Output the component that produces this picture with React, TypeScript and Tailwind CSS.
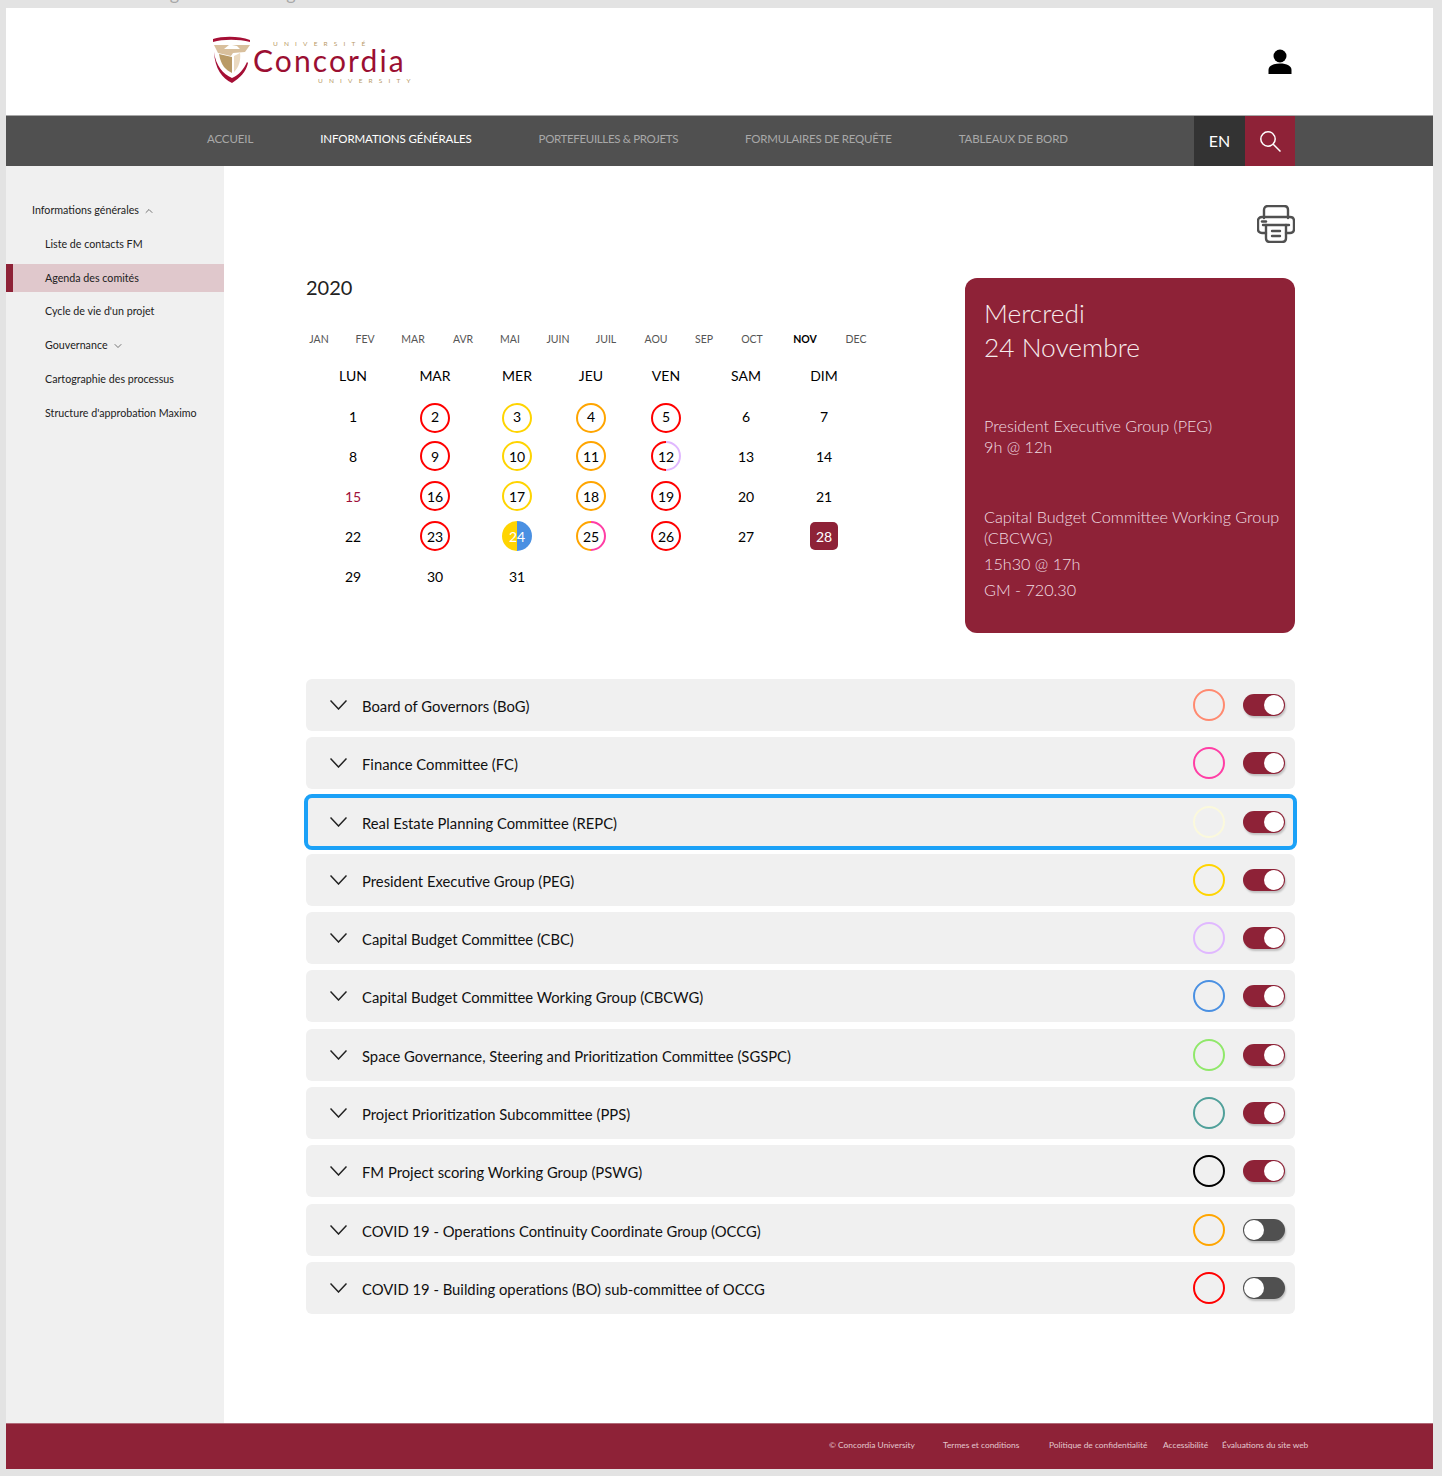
import { ChevronDown, ChevronUp } from "lucide-react";

const months = ["JAN", "FEV", "MAR", "AVR", "MAI", "JUIN", "JUIL", "AOU", "SEP", "OCT", "NOV", "DEC"];
const weekDays = ["LUN", "MAR", "MER", "JEU", "VEN", "SAM", "DIM"];

const RED = "#ff0000";
const YELLOW = "#ffd400";
const ORANGE = "#ffa500";
const LILAC = "#e0b8ff";
const PINK = "#ff3ea5";
const BLUE = "#4a90e2";

type Day = {
  n: number;
  ring?: string;
  split?: [string, string];
  filled?: boolean;
  today?: boolean;
  holiday?: boolean;
};

const days: (Day | null)[] = [
  { n: 1 }, { n: 2, ring: RED }, { n: 3, ring: YELLOW }, { n: 4, ring: ORANGE }, { n: 5, ring: RED }, { n: 6 }, { n: 7 },
  { n: 8 }, { n: 9, ring: RED }, { n: 10, ring: YELLOW }, { n: 11, ring: ORANGE }, { n: 12, split: [RED, LILAC] }, { n: 13 }, { n: 14 },
  { n: 15, holiday: true }, { n: 16, ring: RED }, { n: 17, ring: YELLOW }, { n: 18, ring: ORANGE }, { n: 19, ring: RED }, { n: 20 }, { n: 21 },
  { n: 22 }, { n: 23, ring: RED }, { n: 24, split: [YELLOW, BLUE], filled: true }, { n: 25, split: [ORANGE, PINK] }, { n: 26, ring: RED }, { n: 27 }, { n: 28, today: true },
  { n: 29 }, { n: 30 }, { n: 31 }, null, null, null, null,
];

const committees = [
  { name: "Board of Governors (BoG)", color: "#ff8a70", on: true },
  { name: "Finance Committee (FC)", color: "#ff3ea5", on: true },
  { name: "Real Estate Planning Committee (REPC)", color: "#fbf9dc", on: true, focused: true },
  { name: "President Executive Group (PEG)", color: "#ffd400", on: true },
  { name: "Capital Budget Committee (CBC)", color: "#e0b8ff", on: true },
  { name: "Capital Budget Committee Working Group (CBCWG)", color: "#4a90e2", on: true },
  { name: "Space Governance, Steering and Prioritization Committee (SGSPC)", color: "#90e86a", on: true },
  { name: "Project Prioritization Subcommittee (PPS)", color: "#50a09a", on: true },
  { name: "FM Project scoring Working Group (PSWG)", color: "#000000", on: true },
  { name: "COVID 19 - Operations Continuity Coordinate Group (OCCG)", color: "#ffa500", on: false },
  { name: "COVID 19 - Building operations (BO) sub-committee of OCCG", color: "#ff0000", on: false },
];

function Logo() {
  return (
    <div className="flex h-[48px] items-start">
      <svg width="38" height="48" viewBox="0 0 38 48" className="mt-[-1.5px]">
        <path d="M0 3 C10 0 26 0 37 4 L37 6 C26 3 10 3 0 6 Z" fill="#a50f35" />
        <path d="M1 9 L37 9 L32 16 L20 17 L18 20 L5 17 Z" fill="#d8bf9c" />
        <path d="M11 13 L16 9 L17 7 L19 9 L24 10 L27 13 Z" fill="#ffffff" />
        <path d="M6 18 L19 21 L19 37 C13 34 8 30 6 18 Z" fill="#b99a66" />
        <path d="M21 20 L27 17 C28 24 26 31 21 36 Z" fill="#ead9c0" />
        <path d="M1 16 C3 30 10 38 19 42 C26 39 31 33 34 26 L35 27 C33 36 27 42 19 47 C9 42 2 33 1 16 Z" fill="#a50f35" />
      </svg>
      <div className="ml-[2px] flex flex-col font-['Lato',sans-serif]">
        <span className="ml-[20px] mt-[2px] text-[6.5px] leading-[8px] tracking-[0.95em] text-[#b99a66]">UNIVERSITÉ</span>
        <span className="mt-[1.5px] text-[30px] leading-[22px] tracking-[0.07em] text-[#9b0f32]">Concordia</span>
        <span className="ml-[65px] mt-[6px] text-[6.5px] leading-[8px] tracking-[0.95em] text-[#b99a66]">UNIVERSITY</span>
      </div>
    </div>
  );
}

function PersonIcon() {
  return (
    <svg width="24" height="26" viewBox="0 0 24 26" fill="#000">
      <circle cx="12" cy="7" r="6.5" />
      <path d="M0.5 25 L0.5 21 C0.5 17 5 14.5 12 14.5 C19 14.5 23.5 17 23.5 21 L23.5 25 Z" />
    </svg>
  );
}

function SearchIcon() {
  return (
    <svg width="21" height="21" viewBox="0 0 21 21" fill="none" stroke="#ffffff" strokeWidth="1.5">
      <circle cx="8" cy="8" r="7.2" />
      <path d="M13.2 13.2 L20.5 20.5" />
    </svg>
  );
}

function PrinterIcon() {
  return (
    <svg width="38" height="38" viewBox="0 0 38 38" fill="none" stroke="#505050" strokeWidth="2.4" strokeLinecap="round" strokeLinejoin="round">
      <path d="M7 13 V5 C7 2.5 8.5 1 11 1 H27 C29.5 1 31 2.5 31 5 V13" />
      <path d="M9 28 H5 C2.5 28 1 26.5 1 24 V16 C1 13.5 2.5 12 5 12 H33 C35.5 12 37 13.5 37 16 V24 C37 26.5 35.5 28 33 28 H29" />
      <path d="M6 20 H32" />
      <path d="M9 20 V33 C9 35.5 10.5 37 13 37 H25 C27.5 37 29 35.5 29 33 V20" />
      <path d="M5 16.5 H9" />
      <path d="M15 26 H23" />
      <path d="M15 31 H23" />
    </svg>
  );
}

function RowChevron() {
  return (
    <svg width="17" height="10" viewBox="0 0 17 10" fill="none" stroke="#222" strokeWidth="1.5" className="mr-[15px] shrink-0">
      <path d="M0.5 0.5 L8.5 9 L16.5 0.5" />
    </svg>
  );
}

function SplitDisc({ left, right, filled }: { left: string; right: string; filled?: boolean }) {
  if (filled) {
    return (
      <svg width="30" height="30" viewBox="0 0 30 30" className="absolute inset-0">
        <path d="M15 0 A15 15 0 0 0 15 30 Z" fill={left} />
        <path d="M15 0 A15 15 0 0 1 15 30 Z" fill={right} />
      </svg>
    );
  }
  return (
    <svg width="30" height="30" viewBox="0 0 30 30" className="absolute inset-0" fill="none" strokeWidth="2">
      <path d="M15 1 A14 14 0 0 0 15 29" stroke={left} />
      <path d="M15 1 A14 14 0 0 1 15 29" stroke={right} />
    </svg>
  );
}

function DayCell({ day }: { day: Day | null }) {
  if (!day) return <div />;
  if (day.today) {
    return (
      <div className="flex items-center justify-center">
        <div className="flex h-[28px] w-[28px] items-center justify-center rounded-[5px] bg-[#8e2237] text-white">{day.n}</div>
      </div>
    );
  }
  // the first week's rings sit a little under their digits in the picture
  const firstRow = day.ring && day.n <= 5;
  return (
    <div className="flex items-center justify-center">
      <div
        className={`relative flex h-[30px] w-[30px] items-center justify-center rounded-full ${day.ring ? "border-2" : ""} ${firstRow ? "translate-y-[2px]" : ""}`}
        style={day.ring ? { borderColor: day.ring } : undefined}
      >
        {day.split && <SplitDisc left={day.split[0]} right={day.split[1]} filled={day.filled} />}
        <span className={`relative ${day.filled ? "text-white" : day.holiday ? "text-[#a01038]" : "text-black"} ${firstRow ? "-translate-y-[2px]" : ""}`}>{day.n}</span>
      </div>
    </div>
  );
}

function Toggle({ on }: { on: boolean }) {
  return (
    <div className={`flex h-[22px] w-[42px] items-center rounded-full p-[1px] shadow-[1px_2px_2px_rgba(0,0,0,0.2)] ${on ? "justify-end bg-[#8e2237]" : "justify-start bg-[#505050]"}`}>
      <div className="h-[20px] w-[20px] rounded-full bg-white" />
    </div>
  );
}

export default function App() {
  return (
    <div className="flex h-[1476px] flex-col overflow-hidden bg-[#e3e3e3] pl-[6px] pr-[9px] font-['Lato',sans-serif] text-black">
      {/* strip of the previous page, cut off */}
      <div className="h-[8px] overflow-hidden">
        <p className="mt-[-19px] ml-[45px] text-[18px] leading-[24px] tracking-[0.06em] text-[#a8a8a8]">Informations générales - Agenda des comités</p>
      </div>

      {/* Header */}
      <header className="flex h-[107px] items-center justify-between bg-white pl-[207px] pr-[141px]">
        <Logo />
        <PersonIcon />
      </header>

      {/* Nav */}
      <nav className="flex h-[51px] items-center justify-between border-t border-[#a8a8a8] bg-[#505050] pl-[201px] pr-[138px]">
        <div className="flex gap-[67px] pb-[4px] text-[11.5px] tracking-[-0.01em]">
          <span className="text-[#a8a8a8]">ACCUEIL</span>
          <span className="text-white">INFORMATIONS GÉNÉRALES</span>
          <span className="tracking-[-0.03em] text-[#a8a8a8]">PORTEFEUILLES &amp; PROJETS</span>
          <span className="tracking-[-0.02em] text-[#a8a8a8]">FORMULAIRES DE REQUÊTE</span>
          <span className="text-[#a8a8a8]">TABLEAUX DE BORD</span>
        </div>
        <div className="flex h-full">
          <div className="flex w-[51px] items-center justify-center bg-[#333333] text-[16px] text-white">EN</div>
          <div className="flex w-[50px] items-center justify-center bg-[#8e2237]">
            <SearchIcon />
          </div>
        </div>
      </nav>

      <div className="flex h-[1257px]">
        {/* Sidebar */}
        <aside className="w-[218px] bg-[#f0f0f0] pt-[35px] text-[10.7px] text-[#222]">
          <div className="flex h-[19px] items-center gap-[4px] pl-[26px]">
            Informations générales <ChevronUp size={12} strokeWidth={1.2} />
          </div>
          <div className="mt-[15px] flex h-[19px] items-center pl-[39px]">Liste de contacts FM</div>
          <div className="mt-[10px] flex h-[28px] items-center border-l-[7px] border-[#8e2237] bg-[#e0c8cc] pl-[32px]">Agenda des comités</div>
          <div className="mt-[10px] flex h-[19px] items-center pl-[39px]">Cycle de vie d'un projet</div>
          <div className="mt-[15px] flex h-[19px] items-center gap-[4px] pl-[39px]">
            Gouvernance <ChevronDown size={12} strokeWidth={1.2} />
          </div>
          <div className="mt-[15px] flex h-[19px] items-center pl-[39px]">Cartographie des processus</div>
          <div className="mt-[15px] flex h-[19px] items-center pl-[39px]">Structure d'approbation Maximo</div>
        </aside>

        {/* Main */}
        <main className="flex-1 bg-white pl-[82px] pr-[138px]">
          <div className="flex justify-end pt-[39px]">
            <PrinterIcon />
          </div>

          <div className="mt-[35px] flex justify-between">
            {/* Calendar */}
            <section className="w-[586px]">
              <h2 className="text-[20px] leading-[18px] text-[#222]">2020</h2>
              <div className="mt-[36px] grid grid-cols-[26px_66px_30px_70px_24px_72px_24px_76px_20px_76px_30px_72px] text-[10.5px] leading-[14px] text-[#555]">
                {months.map((m) => (
                  <span key={m} className={`text-center ${m === "NOV" ? "font-bold text-black" : ""}`}>{m}</span>
                ))}
              </div>
              <div className="mt-[10px] ml-[6px] grid grid-cols-[82px_82px_82px_66px_84px_76px_80px] grid-rows-[repeat(6,40px)] items-center text-[14px]">
                {weekDays.map((d) => (
                  <span key={d} className="-mt-[2px] text-center text-[14px]">{d}</span>
                ))}
                {days.map((d, i) => (
                  <DayCell key={i} day={d} />
                ))}
              </div>
            </section>

            {/* Event card */}
            <aside className="flex h-[355px] w-[330px] flex-col rounded-[12px] bg-[#8e2237] pl-[19px] pr-[8px] pt-[18px] font-light text-[#f0dde1]">
              <h2 className="text-[26.3px] leading-[34px] font-light text-[#f7eced]">Mercredi<br />24 Novembre</h2>
              <div className="mt-[52px] text-[16.2px] leading-[20.5px]">
                <p>President Executive Group (PEG)</p>
                <p>9h @ 12h</p>
              </div>
              <div className="mt-[50px] text-[16.2px] leading-[20.5px]">
                <p>Capital Budget Committee Working Group (CBCWG)</p>
                <p className="mt-[5.5px]">15h30 @ 17h</p>
                <p className="mt-[5.5px]">GM - 720.30</p>
              </div>
            </aside>
          </div>

          {/* Committees */}
          <div className="mt-[46px] flex flex-col gap-[6.3px]">
            {committees.map((c) => (
              <div
                key={c.name}
                className={`flex items-center bg-[#f0f0f0] ${c.focused ? "-mx-[2px] -my-[2px] h-[56px] rounded-[8px] border-[4px] border-[#1ba1f7] pl-[22px] pr-[8px]" : "h-[52px] rounded-[6px] pl-[24px] pr-[10px]"}`}
              >
                <RowChevron />
                <span className="flex-1 pt-[2px] text-[14.8px] text-[#111]">{c.name}</span>
                <div className="mr-[18px] h-[32px] w-[32px] rounded-full border-2" style={{ borderColor: c.color }} />
                <Toggle on={c.on} />
              </div>
            ))}
          </div>
        </main>
      </div>

      {/* Footer */}
      <footer className="flex h-[46px] items-center border-t border-[#b06a78] bg-[#8e2237] pb-[3px] pl-[823px] text-[8.4px] text-[#e3c8ce]">
        <span className="w-[114px]">© Concordia University</span>
        <span className="w-[106px]">Termes et conditions</span>
        <span className="w-[114px]">Politique de confidentialité</span>
        <span className="w-[59px]">Accessibilité</span>
        <span>Évaluations du site web</span>
      </footer>
    </div>
  );
}
